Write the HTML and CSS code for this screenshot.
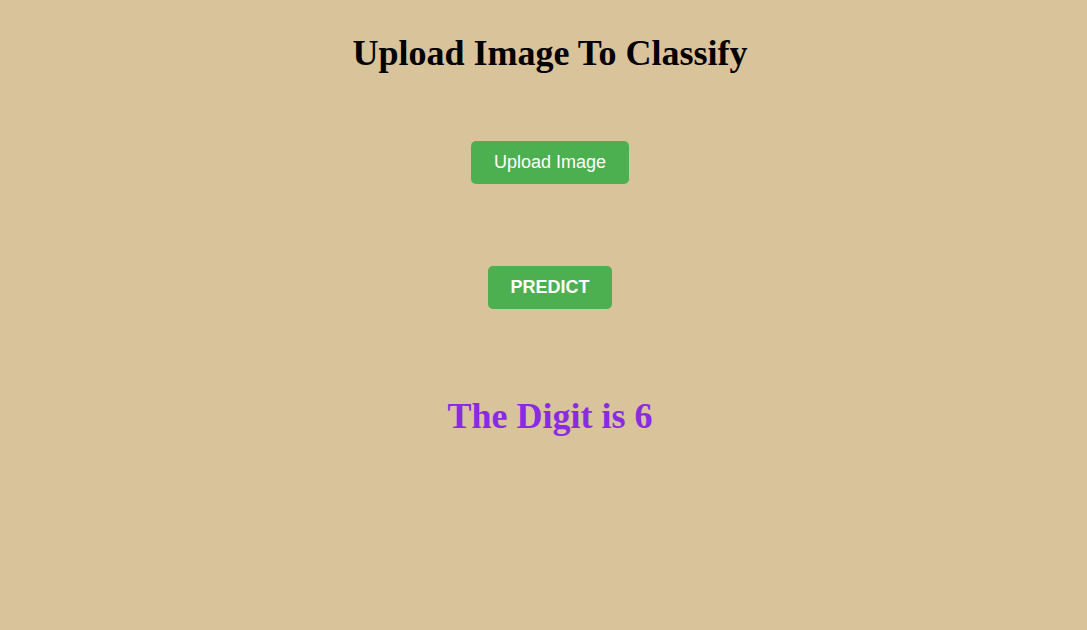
FILE: index.html
```html
<!DOCTYPE html>
<html>
<head>
<meta charset="utf-8">
<link rel="stylesheet" href="styles.css">
</head>
<body>
<div class="page">
  <h1 class="title">Upload Image To Classify</h1>
  <div class="upload-row"><button class="btn btn-upload">Upload Image</button></div>
  <div class="predict-row"><button class="btn btn-predict">PREDICT</button></div>
  <h2 class="result">The Digit is 6</h2>
</div>
</body>
</html>
```

FILE: styles.css
```css
html, body {
  margin: 0;
  padding: 0;
  background: #d9c39a;
}
body {
  font-family: "Liberation Serif", "Times New Roman", serif;
}
.page {
  display: flex;
  flex-direction: column;
  align-items: center;
  padding: 32px 0 0 13px;
}
.title {
  margin: 0;
  font-size: 36px;
  font-weight: bold;
  color: #000;
  line-height: 42px;
}
.upload-row {
  margin-top: 67px;
}
.predict-row {
  margin-top: 82px;
}
.btn {
  display: block;
  border: none;
  background: #4caf50;
  color: #fff;
  border-radius: 5px;
  font-family: "Liberation Sans", Arial, sans-serif;
  height: 43px;
  cursor: pointer;
}
.btn-upload {
  width: 158px;
  font-size: 18px;
}
.btn-predict {
  width: 124px;
  font-size: 18px;
  font-weight: bold;
}
.result {
  margin: 86px 0 0;
  font-size: 36px;
  line-height: 42px;
  font-weight: bold;
  color: #8a2be2;
}
```
